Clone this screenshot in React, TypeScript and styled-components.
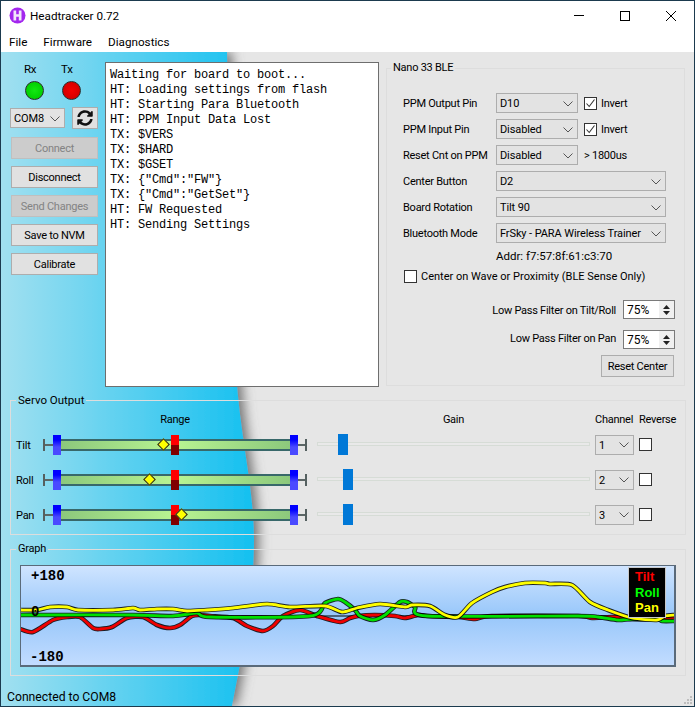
import React from 'react'
import styled, { createGlobalStyle, css } from 'styled-components'
import { FaSyncAlt } from 'react-icons/fa'

const GlobalStyle = createGlobalStyle`
  html, body {
    margin: 0;
    padding: 0;
    background: #ffffff;
  }
  body {
    font-family: Roboto, 'Noto Sans', Arial, sans-serif;
    font-size: 11px;
    letter-spacing: -0.25px;
    color: #000000;
  }
  * {
    box-sizing: border-box;
  }
`

const Window = styled.div`
  width: 695px;
  height: 707px;
  border: 1px solid #1b3a4e;
  display: flex;
  flex-direction: column;
  overflow: hidden;
  background: #ffffff;
`

// タイトルバー
const TitleBar = styled.div`
  height: 29px;
  flex: none;
  display: flex;
  align-items: center;
  padding-left: 8px;
`
const TitleText = styled.span`
  margin-left: 4px;
  font-size: 11.7px;
  letter-spacing: 0;
`
const CaptionButtons = styled.div`
  margin-left: auto;
  display: flex;
`
const CaptionButton = styled.div`
  width: 46px;
  height: 29px;
  display: flex;
  align-items: center;
  justify-content: center;
`

const MenuBar = styled.div`
  height: 22px;
  flex: none;
  display: flex;
  gap: 16px;
  align-items: center;
  padding: 1px 0 0 8px;
  font-size: 11.7px;
  letter-spacing: 0;
`

const Client = styled.div`
  position: relative;
  flex: 1;
  background: #e6e6e6;
`
const Backdrop = styled.svg`
  position: absolute;
  left: 0;
  top: 0;
`
const Content = styled.div`
  position: relative;
  height: 100%;
  display: flex;
  flex-direction: column;
  padding-left: 9px;
`

const TopRow = styled.div`
  display: flex;
  align-items: flex-start;
  padding-top: 8px;
`

// 左の接続パネル
const ControlColumn = styled.div`
  width: 89px;
  margin-top: 2px;
  flex: none;
  display: flex;
  flex-direction: column;
`
const LedRow = styled.div`
  display: flex;
  padding-left: 15px;
`
const LedColumn = styled.div`
  width: 40px;
  display: flex;
  flex-direction: column;
`
const LedLabel = styled.span`
  height: 14px;
  line-height: 15px;
  margin-left: -1px;
  margin-bottom: 5px;
  font-size: 11.5px;
`
const Led = styled.div<{ $color: string; $glow: string }>`
  width: 19px;
  height: 19px;
  border-radius: 50%;
  border: 1px solid #2a2a2a;
  background: radial-gradient(circle at 50% 50%, ${({ $glow }) => $glow} 0%, ${({ $color }) => $color} 80%);
`
const PortRow = styled.div`
  display: flex;
  align-items: center;
  gap: 7px;
  margin-top: 7px;
`
const IconButton = styled.div`
  width: 26px;
  height: 22px;
  border: 1px solid #adadad;
  background: #e1e1e1;
  display: flex;
  align-items: center;
  justify-content: center;
`
const ButtonStack = styled.div`
  display: flex;
  flex-direction: column;
  gap: 7px;
  margin: 8px 0 0 1px;
`
const Button = styled.div<{ $disabled?: boolean; $width?: number }>`
  width: ${({ $width }) => $width ?? 87}px;
  height: 22px;
  padding-top: 1px;
  border: 1px solid ${({ $disabled }) => ($disabled ? '#bfbfbf' : '#adadad')};
  background: ${({ $disabled }) => ($disabled ? '#cccccc' : '#e1e1e1')};
  color: ${({ $disabled }) => ($disabled ? '#838383' : '#000000')};
  display: flex;
  align-items: center;
  justify-content: center;
`

const LogBox = styled.div`
  width: 274px;
  height: 325px;
  flex: none;
  margin: 2px 0 0 6px;
  border: 1px solid #6e6e6e;
  background: #ffffff;
  padding: 5px 4px;
  font-family: 'Liberation Mono', monospace;
  font-size: 12px;
  letter-spacing: -0.2px;
  line-height: 15px;
  white-space: pre;
  overflow: hidden;
`

const Group = styled.fieldset<{ $height: number }>`
  height: ${({ $height }) => $height}px;
  margin: 0;
  padding: 0;
  min-width: 0;
  border: 1px solid #dddddd;
`
const Legend = styled.legend<{ $inset: number; $wide?: boolean }>`
  height: 16px;
  line-height: 16px;
  margin-left: ${({ $inset }) => $inset}px;
  padding: 0 2px;
  ${({ $wide }) => $wide && 'font-size: 11.5px; letter-spacing: 0;'}
`

// 設定パネル
const SettingsGroup = styled(Group)`
  width: 299px;
  flex: none;
  margin-left: 7px;
  padding: 17px 9px 0 16px;
`
const FormGrid = styled.div`
  display: grid;
  grid-template-columns: 93px 82px 1fr;
  grid-auto-rows: 20px;
  row-gap: 6px;
  align-items: center;
  white-space: nowrap;
`
const FieldLabel = styled.span`
  padding-top: 1px;
`
const WideField = styled.div`
  grid-column: 2 / 4;
`
const InlineOption = styled.div`
  display: flex;
  align-items: center;
  gap: 4px;
  margin-left: 6px;
`
const Hint = styled.span`
  margin-left: 6px;
  padding-top: 1px;
`
const AddrLine = styled.div`
  height: 14px;
  line-height: 14px;
  margin: 6px 0 0 93px;
  font-size: 11.5px;
  letter-spacing: 0;
`
const WaveRow = styled.div`
  display: flex;
  align-items: center;
  gap: 4px;
  height: 15px;
  margin: 6px 0 0 1px;
  letter-spacing: 0;
`
const FilterRow = styled.div<{ $top: number; $drop: number }>`
  display: flex;
  justify-content: flex-end;
  gap: 7px;
  margin-top: ${({ $top }) => $top}px;
  line-height: 14px;
  & > span {
    padding-top: ${({ $drop }) => $drop}px;
  }
`
const Spinner = styled.div`
  width: 52px;
  height: 19px;
  border: 1px solid #7a7a7a;
  background: #ffffff;
  display: flex;
  align-items: center;
  justify-content: space-between;
  padding-left: 3px;
  font-size: 12px;
  letter-spacing: 0;
`
const SpinArrows = styled.div`
  width: 15px;
  height: 17px;
  background: #f0f0f0;
  display: flex;
  flex-direction: column;
  align-items: center;
  justify-content: center;
  gap: 2px;
`
const ResetRow = styled.div`
  display: flex;
  justify-content: flex-end;
  margin: 6px 1px 0 0;
`

const SelectFrame = styled.div<{ $width?: number }>`
  width: ${({ $width }) => ($width ? `${$width}px` : '100%')};
  height: 20px;
  border: 1px solid #adadad;
  background: #e3e3e3;
  display: flex;
  align-items: center;
  justify-content: space-between;
  padding: 1px 4px 0 3px;
  white-space: nowrap;
  letter-spacing: -0.1px;
`
const CheckFrame = styled.div`
  width: 13px;
  height: 13px;
  flex: none;
  border: 1px solid #333333;
  background: #ffffff;
  display: flex;
  align-items: center;
  justify-content: center;
`

// サーボ出力
const servoColumns = css`
  display: grid;
  grid-template-columns: 27px 264px 288px 44px 1fr;
  align-items: center;
`
const ServoGroup = styled(Group)`
  margin-top: 5px;
  width: 676px;
  padding: 4px 0 0 5px;
`
const ServoHeader = styled.div`
  ${servoColumns};
  height: 14px;
  margin-bottom: 8px;
  white-space: nowrap;
`
const ServoRows = styled.div`
  ${servoColumns};
  grid-auto-rows: 21px;
  row-gap: 14px;
`
const ServoName = styled.span`
  padding-top: 2px;
`
const ColumnTitle = styled.span<{ $center?: boolean; $offset?: number }>`
  text-align: ${({ $center }) => ($center ? 'center' : 'left')};
  padding-left: ${({ $offset }) => $offset ?? 0}px;
`
const RangeTrack = styled.div`
  position: relative;
  height: 21px;
`
const Rail = styled.div`
  position: absolute;
  left: 0;
  right: 0;
  top: 5px;
  height: 12px;
  border-left: 2px solid #556060;
  border-right: 2px solid #556060;
  &::before {
    content: '';
    position: absolute;
    left: 0;
    right: 0;
    top: 5px;
    height: 2px;
    background: #5c6666;
  }
`
const RangeBar = styled.div`
  position: absolute;
  left: 18px;
  width: 229px;
  top: 5px;
  height: 12px;
  border-top: 2px solid #38686a;
  border-bottom: 2px solid #38686a;
  background: linear-gradient(90deg, #8cc87c 0%, #b8f492 50%, #8cc87c 100%);
`
const RangeHandle = styled.div<{ $left: number; $center?: boolean }>`
  position: absolute;
  left: ${({ $left }) => $left}px;
  top: 1px;
  width: 8px;
  height: 20px;
  background: ${({ $center }) =>
    $center
      ? 'linear-gradient(180deg, #ff0000 0%, #ff0000 50%, #800000 50%, #800000 100%)'
      : 'linear-gradient(180deg, #0000ff 0%, #0000ff 25%, #4a4aff 60%, #4a4aff 100%)'};
`
const Diamond = styled.div<{ $left: number }>`
  position: absolute;
  left: ${({ $left }) => $left - 5}px;
  top: 6px;
  width: 9px;
  height: 9px;
  transform: rotate(45deg);
  background: #ffff00;
  border: 1px solid #222222;
`
const GainCell = styled.div`
  position: relative;
  height: 21px;
  margin-left: 10px;
  margin-right: 5px;
`
const GainTrack = styled.div`
  position: absolute;
  left: 0;
  right: 0;
  top: 8px;
  height: 4px;
  background: #e9e9e9;
  border: 1px solid #d6dcd6;
`
const GainThumb = styled.div<{ $left: number }>`
  position: absolute;
  left: ${({ $left }) => $left}px;
  top: 0;
  width: 10px;
  height: 21px;
  background: #0078d7;
`

// グラフ
const GraphGroup = styled(Group)`
  margin-top: 6px;
  width: 676px;
  padding: 8px 0 0 9px;
`
const GraphCanvas = styled.div`
  position: relative;
  width: 656px;
  height: 102px;
  border-style: solid;
  border-color: #5a6a7a;
  border-width: 1px 2px 2px 1px;
  background: linear-gradient(180deg, #cfe4ff 0%, #98c7fa 50%, #c2dcff 100%);
`
const GraphSvg = styled.svg`
  display: block;
`
const ScaleText = styled.text`
  font-family: 'Liberation Mono', monospace;
  font-weight: bold;
  font-size: 14px;
  letter-spacing: 0;
  fill: #000000;
`
const GraphLegend = styled.div`
  position: absolute;
  left: 607px;
  top: 1px;
  width: 38px;
  height: 51px;
  background: #000000;
  border: 1px solid #c8c8c8;
  padding: 1px 0 0 6px;
  font-family: 'Liberation Sans', Arial, sans-serif;
  font-weight: bold;
  font-size: 13px;
  letter-spacing: 0;
  line-height: 15.5px;
`
const LegendLine = styled.div<{ $color: string }>`
  color: ${({ $color }) => $color};
`

const StatusBar = styled.div`
  flex: 1;
  display: flex;
  align-items: flex-end;
  padding: 0 0 2px 0;
  margin-left: -3px;
  font-size: 12.2px;
  letter-spacing: 0;
  line-height: 14px;
`
const Grip = styled.svg`
  position: absolute;
  right: 1px;
  bottom: 1px;
`

const Chevron = () => (
  <svg width="10" height="6" viewBox="0 0 10 6">
    <polyline points="0.5,0.5 5,5 9.5,0.5" fill="none" stroke="#555555" strokeWidth="1" />
  </svg>
)

const Select = ({ value, width }: { value: string; width?: number }) => (
  <SelectFrame $width={width}>
    <span>{value}</span>
    <Chevron />
  </SelectFrame>
)

const Check = ({ checked }: { checked?: boolean }) => (
  <CheckFrame>
    {checked && (
      <svg width="11" height="11" viewBox="0 0 11 11">
        <polyline points="1.5,5.5 4.2,8.5 9.5,1.5" fill="none" stroke="#333333" strokeWidth="1.1" />
      </svg>
    )}
  </CheckFrame>
)

const Spin = () => (
  <Spinner>
    <span>75%</span>
    <SpinArrows>
      <svg width="7" height="4" viewBox="0 0 7 4">
        <polygon points="3.5,0 7,4 0,4" fill="#222222" />
      </svg>
      <svg width="7" height="4" viewBox="0 0 7 4">
        <polygon points="0,0 7,0 3.5,4" fill="#222222" />
      </svg>
    </SpinArrows>
  </Spinner>
)

const logLines = [
  'Waiting for board to boot...',
  'HT: Loading settings from flash',
  'HT: Starting Para Bluetooth',
  'HT: PPM Input Data Lost',
  'TX: $VERS',
  'TX: $HARD',
  'TX: $GSET',
  'TX: {"Cmd":"FW"}',
  'TX: {"Cmd":"GetSet"}',
  'HT: FW Requested',
  'HT: Sending Settings',
]

const servos = [
  { name: 'Tilt', marker: 164, gain: 21, channel: '1' },
  { name: 'Roll', marker: 150, gain: 26, channel: '2' },
  { name: 'Pan', marker: 182, gain: 26, channel: '3' },
]

const redTrace =
  '20,629 33,632 53,620 67,617 80,617 93,628 100,629 112,627 127,618 143,617 157,625 170,628 180,625 192,616 200,615 210,616 233,618 247,626 263,631 273,626 283,616 300,610 317,616 340,622 350,618 358,616 375,615 395,616 405,618 418,615 428,616 458,617 475,619 492,616 578,616 592,618 612,617 632,619 658,619 675,618'
const greenTrace =
  '20,615 43,615 133,615 173,616 197,613 210,617 310,616 325,603 338,599 345,602 355,610 360,616 373,620 385,615 400,602 407,602 415,607 427,616 578,616 598,617 618,620 632,619 657,619 662,621 675,621'
const yellowTrace =
  '20,610 37,610 50,607 67,607 78,610 113,610 133,608 140,610 157,609 173,609 187,611 207,610 233,608 267,604 290,607 325,606 342,612 357,608 380,604 405,607 412,605 430,606 445,615 458,617 472,603 492,592 505,587 525,583 545,583 550,584 572,585 590,602 608,610 632,618 657,620 665,616 675,615'

// 折れ線を少しだけ滑らかにする
const smoothPath = (points: string) => {
  const pts = points.split(' ').map((p) => p.split(',').map(Number))
  let d = `M${pts[0][0]} ${pts[0][1]}`
  for (let i = 0; i < pts.length - 1; i++) {
    const p0 = pts[Math.max(i - 1, 0)]
    const p1 = pts[i]
    const p2 = pts[i + 1]
    const p3 = pts[Math.min(i + 2, pts.length - 1)]
    const k = 1 / 8
    const c1x = p1[0] + (p2[0] - p0[0]) * k
    const c1y = p1[1] + (p2[1] - p0[1]) * k
    const c2x = p2[0] - (p3[0] - p1[0]) * k
    const c2y = p2[1] - (p3[1] - p1[1]) * k
    d += ` C${c1x} ${c1y} ${c2x} ${c2y} ${p2[0]} ${p2[1]}`
  }
  return d
}

const Trace = ({ points, color }: { points: string; color: string }) => {
  const d = smoothPath(points)
  return (
    <>
      <path d={d} fill="none" stroke="#000000" strokeWidth="4.6" strokeLinejoin="round" opacity="0.85" />
      <path d={d} fill="none" stroke={color} strokeWidth="2.8" strokeLinejoin="round" />
    </>
  )
}

const App = () => {
  return (
    <Window>
      <GlobalStyle />
      <TitleBar>
        <svg width="17" height="17" viewBox="0 0 17 17">
          <circle cx="8.5" cy="8.5" r="8" fill="#a326ee" />
          <path d="M4.5 3.5 H7.2 V7.2 H9.8 V3.5 H12.5 V13.5 H9.8 V9.8 H7.2 V13.5 H4.5 Z" fill="#f2e6fb" />
        </svg>
        <TitleText>Headtracker 0.72</TitleText>
        <CaptionButtons>
          <CaptionButton>
            <svg width="10" height="2" viewBox="0 0 10 2">
              <rect width="10" height="1" fill="#000000" />
            </svg>
          </CaptionButton>
          <CaptionButton>
            <svg width="10" height="10" viewBox="0 0 10 10">
              <rect x="0.5" y="0.5" width="9" height="9" fill="none" stroke="#000000" />
            </svg>
          </CaptionButton>
          <CaptionButton>
            <svg width="10" height="10" viewBox="0 0 10 10">
              <path d="M0 0 L10 10 M10 0 L0 10" stroke="#000000" strokeWidth="1" />
            </svg>
          </CaptionButton>
        </CaptionButtons>
      </TitleBar>
      <MenuBar>
        <span>File</span>
        <span>Firmware</span>
        <span>Diagnostics</span>
      </MenuBar>
      <Client>
        <Backdrop width="693" height="654" viewBox="1 52 693 654">
          <defs>
            <linearGradient id="sky" x1="0" x2="1" y1="0" y2="0">
              <stop offset="0" stopColor="#a2e0f0" />
              <stop offset="1" stopColor="#14c0f0" />
            </linearGradient>
            <filter id="edgeShadow" x="-10%" y="-5%" width="130%" height="110%">
              <feDropShadow dx="5" dy="0" stdDeviation="6" floodColor="#6a6a6a" floodOpacity="0.9" />
            </filter>
          </defs>
          <path
            d="M0 52 H227 C229 150 232 300 237 385 C242 445 254 490 254 540 C254 600 241 660 232 706 H0 Z"
            fill="url(#sky)"
            filter="url(#edgeShadow)"
          />
        </Backdrop>
        <Content>
          <TopRow>
            <ControlColumn>
              <LedRow>
                <LedColumn>
                  <LedLabel>Rx</LedLabel>
                  <Led $color="#00cc00" $glow="#12e812" />
                </LedColumn>
                <LedColumn>
                  <LedLabel>Tx</LedLabel>
                  <Led $color="#d00000" $glow="#f40000" />
                </LedColumn>
              </LedRow>
              <PortRow>
                <Select value="COM8" width={55} />
                <IconButton>
                  <FaSyncAlt size={16} color="#111111" />
                </IconButton>
              </PortRow>
              <ButtonStack>
                <Button $disabled>Connect</Button>
                <Button>Disconnect</Button>
                <Button $disabled>Send Changes</Button>
                <Button>Save to NVM</Button>
                <Button>Calibrate</Button>
              </ButtonStack>
            </ControlColumn>
            <LogBox>{logLines.join('\n')}</LogBox>
            <SettingsGroup $height={326}>
              <Legend $inset={-12}>Nano 33 BLE</Legend>
              <FormGrid>
                <FieldLabel>PPM Output Pin</FieldLabel>
                <Select value="D10" />
                <InlineOption>
                  <Check checked />
                  <span>Invert</span>
                </InlineOption>
                <FieldLabel>PPM Input Pin</FieldLabel>
                <Select value="Disabled" />
                <InlineOption>
                  <Check checked />
                  <span>Invert</span>
                </InlineOption>
                <FieldLabel>Reset Cnt on PPM</FieldLabel>
                <Select value="Disabled" />
                <Hint>&gt; 1800us</Hint>
                <FieldLabel>Center Button</FieldLabel>
                <WideField>
                  <Select value="D2" width={170} />
                </WideField>
                <FieldLabel>Board Rotation</FieldLabel>
                <WideField>
                  <Select value="Tilt 90" width={170} />
                </WideField>
                <FieldLabel>Bluetooth Mode</FieldLabel>
                <WideField>
                  <Select value="FrSky - PARA Wireless Trainer" width={170} />
                </WideField>
              </FormGrid>
              <AddrLine>Addr: f7:57:8f:61:c3:70</AddrLine>
              <WaveRow>
                <Check />
                <span>Center on Wave or Proximity (BLE Sense Only)</span>
              </WaveRow>
              <FilterRow $top={16} $drop={4}>
                <span>Low Pass Filter on Tilt/Roll</span>
                <Spin />
              </FilterRow>
              <FilterRow $top={11} $drop={2}>
                <span>Low Pass Filter on Pan</span>
                <Spin />
              </FilterRow>
              <ResetRow>
                <Button $width={73}>Reset Center</Button>
              </ResetRow>
            </SettingsGroup>
          </TopRow>
          <ServoGroup $height={143}>
            <Legend $inset={0} $wide>Servo Output</Legend>
            <ServoHeader>
              <span />
              <ColumnTitle $center>Range</ColumnTitle>
              <ColumnTitle $center $offset={5}>Gain</ColumnTitle>
              <ColumnTitle>Channel</ColumnTitle>
              <ColumnTitle>Reverse</ColumnTitle>
            </ServoHeader>
            <ServoRows>
              {servos.map((servo) => (
                <React.Fragment key={servo.name}>
                  <ServoName>{servo.name}</ServoName>
                  <RangeTrack>
                    <Rail />
                    <RangeBar />
                    <RangeHandle $left={10} />
                    <RangeHandle $left={247} />
                    <RangeHandle $left={128} $center />
                    <Diamond $left={servo.marker - 43} />
                  </RangeTrack>
                  <GainCell>
                    <GainTrack />
                    <GainThumb $left={servo.gain} />
                  </GainCell>
                  <Select value={servo.channel} width={39} />
                  <Check />
                </React.Fragment>
              ))}
            </ServoRows>
          </ServoGroup>
          <GraphGroup $height={135}>
            <Legend $inset={-4}>Graph</Legend>
            <GraphCanvas>
              <GraphSvg width="653" height="99" viewBox="21 566 653 99">
                <line x1="21" y1="616" x2="674" y2="616" stroke="#000000" strokeWidth="1" />
                <ScaleText x="31" y="580">+180</ScaleText>
                <ScaleText x="30" y="661">-180</ScaleText>
                <Trace points={redTrace} color="#f00000" />
                <Trace points={greenTrace} color="#00e000" />
                <Trace points={yellowTrace} color="#ffff00" />
                <ScaleText x="31" y="616">0</ScaleText>
              </GraphSvg>
              <GraphLegend>
                <LegendLine $color="#ff0000">Tilt</LegendLine>
                <LegendLine $color="#00ff00">Roll</LegendLine>
                <LegendLine $color="#ffff00">Pan</LegendLine>
              </GraphLegend>
            </GraphCanvas>
          </GraphGroup>
          <StatusBar>Connected to COM8</StatusBar>
        </Content>
        <Grip width="10" height="10" viewBox="0 0 10 10">
          <path d="M7 1h2v2h-2z M4 4h2v2h-2z M7 4h2v2h-2z M1 7h2v2h-2z M4 7h2v2h-2z M7 7h2v2h-2z" fill="#bdbdbd" />
        </Grip>
      </Client>
    </Window>
  )
}

export default App
